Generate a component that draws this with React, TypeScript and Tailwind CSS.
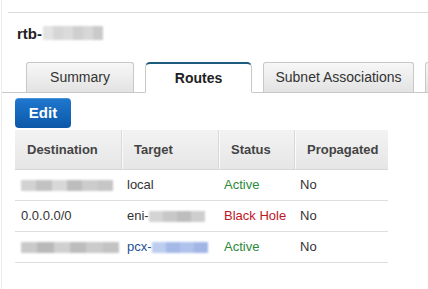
import React from "react";

type Cell = { text?: string; blur?: string[]; tone?: "green" | "red" | "link" };

const rows: Cell[][] = [
  [
    { blur: ["#d2d2d2", "#c2c2c2", "#d8d8d8", "#bdbdbd", "#cccccc", "#c6c6c6"] },
    { text: "local" },
    { text: "Active", tone: "green" },
    { text: "No" },
  ],
  [
    { text: "0.0.0.0/0" },
    { text: "eni-", blur: ["#d4d4d4", "#c8c8c8", "#bdbdbd", "#cecece"] },
    { text: "Black Hole", tone: "red" },
    { text: "No" },
  ],
  [
    { blur: ["#cacaca", "#b9b9b9", "#d0d0d0", "#bdbdbd", "#cbcbcb", "#c3c3c3"] },
    { text: "pcx-", tone: "link", blur: ["#bccdef", "#a5b9e7", "#b0c2ec", "#a2b6e5"] },
    { text: "Active", tone: "green" },
    { text: "No" },
  ],
];

const widths = ["w-[106px]", "w-[97px]", "w-[76px]", "w-[94px]"];
const headers = ["Destination", "Target", "Status", "Propagated"];

function Blur({ colors, w }: { colors: string[]; w: string }) {
  return (
    <div className={`flex h-[11px] ${w} blur-[1px]`}>
      {colors.map((c, i) => (
        <span key={i} className="flex-1" style={{ backgroundColor: c }} />
      ))}
    </div>
  );
}

function Tab({ label, active, w }: { label?: string; active?: boolean; w: string }) {
  if (active) {
    return (
      <div
        className={`${w} shrink-0 whitespace-nowrap h-[31px] -mb-px flex items-center justify-center bg-white border border-[#c8c8c8] border-b-white border-t-2 border-t-[#1c5b7c] rounded-t-[5px] text-[14px] font-bold text-[#222]`}
      >
        {label}
      </div>
    );
  }
  return (
    <div
      className={`${w} shrink-0 whitespace-nowrap h-[30px] flex items-center justify-center bg-gradient-to-b from-[#f7f7f7] to-[#e3e3e3] border border-b-0 border-[#c8c8c8] rounded-t-[3px] text-[14px] text-[#333]`}
    >
      {label}
    </div>
  );
}

export default function App() {
  return (
    <div className="w-[428px] h-[289px] bg-white overflow-hidden font-['Liberation_Sans',Arial,sans-serif] pl-px">
      <div className="h-full border-l border-[#ececec]">
        <div className="pt-[12px]">
          <div className="ml-[6px] h-px bg-[#dcdcdc]" />
        </div>

        <div className="h-[49px] pl-[15px] pt-[12px] flex items-start gap-px">
          <span className="text-[15px] leading-[17px] font-bold text-[#222]">rtb-</span>
          <Blur colors={["#e3e3e3", "#d6d6d6", "#dbdbdb", "#cfcfcf", "#d7d7d7", "#cacaca"]} w="w-[60px] h-[14px] mt-[1px]" />
        </div>

        <div className="flex items-end gap-[11px] pl-[24px] border-b border-[#c8c8c8] h-[31px]">
          <Tab label="Summary" w="w-[108px]" />
          <Tab label="Routes" active w="w-[107px]" />
          <Tab label="Subnet Associations" w="w-[151px]" />
          <Tab w="w-[150px]" />
        </div>

        <div className="pl-[13px] pt-[5px]">
          <button className="w-[56px] h-[30px] rounded-[4px] bg-gradient-to-b from-[#1f78cf] to-[#0c58a8] text-white font-bold text-[15px] shadow-[inset_0_1px_0_rgba(255,255,255,0.2)]">
            Edit
          </button>

          <div className="mt-[2px] w-[373px] text-[13px]">
            <div className="flex h-[40px] bg-gradient-to-b from-[#f3f3f3] to-[#e6e6e6] border-b border-[#d6d6d6]">
              {headers.map((h, i) => (
                <div
                  key={h}
                  className={`${widths[i]} flex items-center pl-[12px] font-bold text-[#444] ${
                    i > 0 ? "border-l border-[#d9d9d9] shadow-[inset_1px_0_0_#fafafa]" : ""
                  }`}
                >
                  {h}
                </div>
              ))}
            </div>

            {rows.map((row, r) => (
              <div key={r} className="flex h-[31px] border-b border-[#dedede]">
                {row.map((c, i) => (
                  <div
                    key={i}
                    className={`${widths[i]} flex items-center pl-[6px] ${
                      c.tone === "green"
                        ? "text-[#2b8a3a]"
                        : c.tone === "red"
                        ? "text-[#c0141f]"
                        : c.tone === "link"
                        ? "text-[#1f4f96]"
                        : "text-[#333]"
                    }`}
                  >
                    {c.text}
                    {c.blur && (
                      <Blur colors={c.blur} w={c.text ? "w-[56px]" : r === 2 ? "w-[98px]" : "w-[92px]"} />
                    )}
                  </div>
                ))}
              </div>
            ))}
          </div>
        </div>
      </div>
    </div>
  );
}
